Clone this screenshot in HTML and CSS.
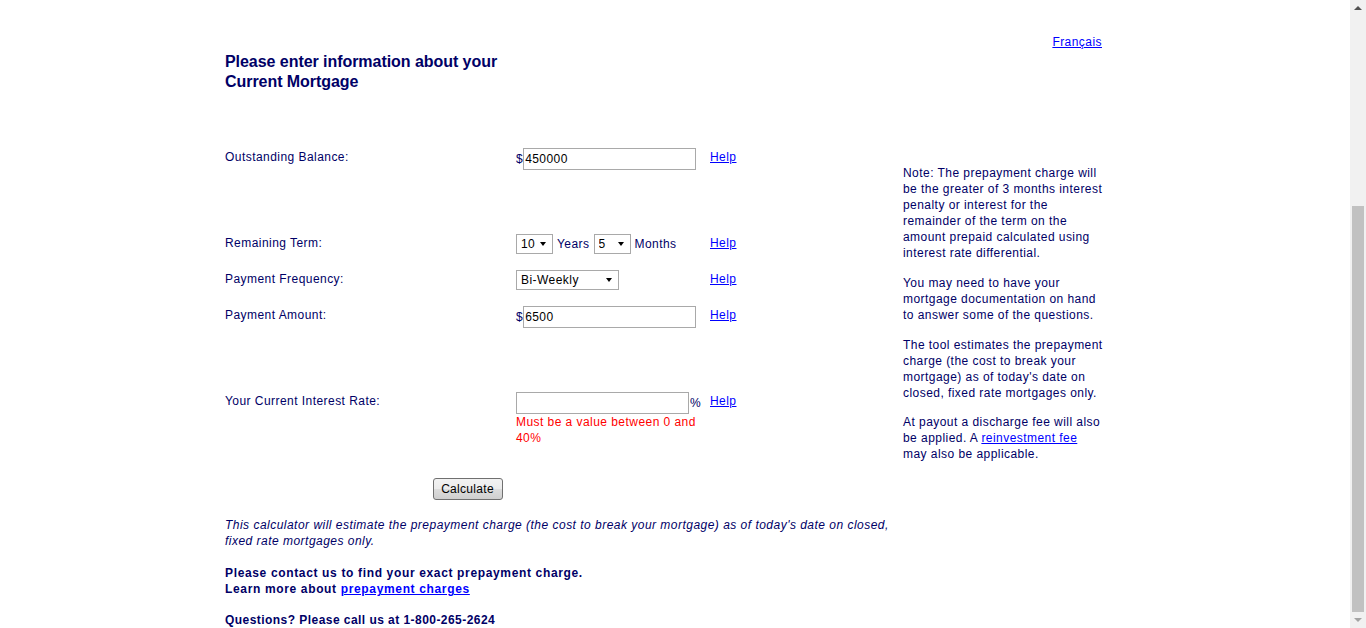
FILE: index.html
```html
<!DOCTYPE html>
<html lang="en">
<head>
<meta charset="utf-8">
<title>Prepayment Charge Calculator</title>
<link rel="stylesheet" href="styles.css">
</head>
<body>
<div class="page">
  <div class="lang"><a href="#">Français</a></div>
  <h1 class="title">Please enter information about your<br>Current Mortgage</h1>
  <div class="layout">
    <div class="main">
      <form class="calc">
        <div class="row row--spaced">
          <div class="label">Outstanding Balance:</div>
          <div class="field"><span class="unit">$</span><input class="text" type="text" value="450000"></div>
          <div class="help"><a href="#">Help</a></div>
        </div>
        <div class="row">
          <div class="label">Remaining Term:</div>
          <div class="field">
            <span class="select-wrap"><select class="sel sel--short"><option>10</option></select></span>
            <span>Years</span>
            <span class="select-wrap"><select class="sel sel--short"><option>5</option></select></span>
            <span>Months</span>
          </div>
          <div class="help"><a href="#">Help</a></div>
        </div>
        <div class="row">
          <div class="label">Payment Frequency:</div>
          <div class="field">
            <span class="select-wrap"><select class="sel sel--freq"><option>Bi-Weekly</option></select></span>
          </div>
          <div class="help"><a href="#">Help</a></div>
        </div>
        <div class="row row--spaced">
          <div class="label">Payment Amount:</div>
          <div class="field"><span class="unit">$</span><input class="text" type="text" value="6500"></div>
          <div class="help"><a href="#">Help</a></div>
        </div>
        <div class="row row--last">
          <div class="label">Your Current Interest Rate:</div>
          <div class="field-stack">
            <div class="field"><input class="text" type="text" value=""><span class="unit">%</span></div>
            <div class="error">Must be a value between 0 and 40%</div>
          </div>
          <div class="help"><a href="#">Help</a></div>
        </div>
        <div class="actions"><button type="button" class="btn">Calculate</button></div>
      </form>
      <p class="disclaimer">This calculator will estimate the prepayment charge (the cost to break your mortgage) as of today's date on closed, fixed rate mortgages only.</p>
      <p class="contact">Please contact us to find your exact prepayment charge.<br>Learn more about <a href="#">prepayment charges</a></p>
      <p class="contact contact--gap">Questions? Please call us at 1-800-265-2624</p>
    </div>
    <div class="note">
      <p>Note: The prepayment charge will be the greater of 3 months interest penalty or interest for the remainder of the term on the amount prepaid calculated using interest rate differential.</p>
      <p>You may need to have your mortgage documentation on hand to answer some of the questions.</p>
      <p>The tool estimates the prepayment charge (the cost to break your mortgage) as of today's date on closed, fixed rate mortgages only.</p>
      <p class="note-last">At payout a discharge fee will also be applied. A <a href="#">reinvestment fee</a> may also be applicable.</p>
    </div>
  </div>
</div>
<div class="scrollbar" aria-hidden="true">
  <span class="sb-up"></span>
  <span class="sb-thumb"></span>
  <span class="sb-down"></span>
</div>
</body>
</html>
```
FILE: styles.css
```css
html {
  overflow: hidden;
}
body {
  margin: 0;
  padding-right: 16px;
  background: #fff;
  color: #000066;
  font-family: "Liberation Sans", Arial, sans-serif;
  font-size: 12px;
  line-height: 16px;
  letter-spacing: 0.45px;
}
a {
  color: #0000ff;
  text-decoration: underline;
}
.page {
  width: 900px;
  margin: 0 auto;
}
.lang {
  padding-top: 34px;
  padding-right: 23px;
  text-align: right;
}
.title {
  margin: 2px 0 0;
  font-size: 16px;
  line-height: 20px;
  font-weight: bold;
  letter-spacing: -0.05px;
}
.layout {
  display: flex;
  margin-top: 56px;
}
.main {
  width: 678px;
}
.note {
  width: 201px;
  padding-top: 17px;
}
.note p {
  margin: 0 0 14px;
}
.note p.note-last {
  margin-top: -1px;
}
.calc {
  margin: 0;
}
.row {
  display: grid;
  grid-template-columns: 291px 194px auto;
  align-items: start;
  margin-bottom: 16px;
}
.row--spaced {
  margin-bottom: 64px;
}
.row--last {
  margin-bottom: 32px;
}
.label,
.help {
  padding-top: 1px;
}
.field {
  display: flex;
  align-items: baseline;
  gap: 4px;
}
.field .unit {
  margin-right: -4px;
}
.field .text + .unit {
  margin-left: -3px;
}
.text {
  box-sizing: border-box;
  width: 173px;
  height: 22px;
  margin: 0;
  padding: 0 1px;
  border: 1px solid #a9a9a9;
  border-radius: 0;
  background: #fff;
  color: #000;
  font-family: "Liberation Sans", Arial, sans-serif;
  font-size: 12px;
  letter-spacing: 0.45px;
}
.select-wrap {
  position: relative;
  display: inline-block;
}
.select-wrap::after {
  content: "";
  position: absolute;
  right: 7px;
  top: 8px;
  border-left: 3px solid transparent;
  border-right: 3px solid transparent;
  border-top: 4px solid #000;
  pointer-events: none;
}
.sel {
  appearance: none;
  -webkit-appearance: none;
  box-sizing: border-box;
  height: 20px;
  margin: 0;
  padding: 0 0 0 4px;
  border: 1px solid #a9a9a9;
  border-radius: 0;
  background: #fff;
  color: #000;
  font-family: "Liberation Sans", Arial, sans-serif;
  font-size: 12px;
  letter-spacing: 0.45px;
}
.sel--short {
  width: 37px;
}
.sel--freq {
  width: 103px;
}
.error {
  color: #ff0000;
}
.actions {
  width: 485px;
  text-align: center;
  margin-bottom: 16px;
}
.btn {
  box-sizing: border-box;
  width: 70px;
  height: 22px;
  padding: 0;
  border: 1px solid #707070;
  border-radius: 3px;
  background: linear-gradient(#f2f2f2 0%, #ebebeb 50%, #dddddd 50%, #cfcfcf 100%);
  color: #000;
  font-family: "Liberation Sans", Arial, sans-serif;
  font-size: 12px;
  letter-spacing: 0.3px;
}
.disclaimer {
  margin: 0;
  font-style: italic;
  letter-spacing: 0.48px;
  padding-top: 1px;
}
.contact {
  margin: 16px 0 0;
  font-weight: bold;
  letter-spacing: 0.65px;
}
.contact--gap {
  margin-top: 15px;
  letter-spacing: 0.45px;
}

/* window scrollbar (page shown scrolled to its end) */
.scrollbar {
  position: fixed;
  top: 0;
  right: 0;
  width: 16px;
  height: 100%;
  background: #f1f1f1;
}
.sb-up,
.sb-down {
  position: absolute;
  left: 4px;
  width: 0;
  height: 0;
  border-left: 4px solid transparent;
  border-right: 4px solid transparent;
}
.sb-up {
  top: 6px;
  border-bottom: 4px solid #505050;
}
.sb-down {
  bottom: 6px;
  border-top: 4px solid #a3a3a3;
}
.sb-thumb {
  position: absolute;
  top: 206px;
  left: 2px;
  right: 2px;
  height: 406px;
  background: #c1c1c1;
}
```
